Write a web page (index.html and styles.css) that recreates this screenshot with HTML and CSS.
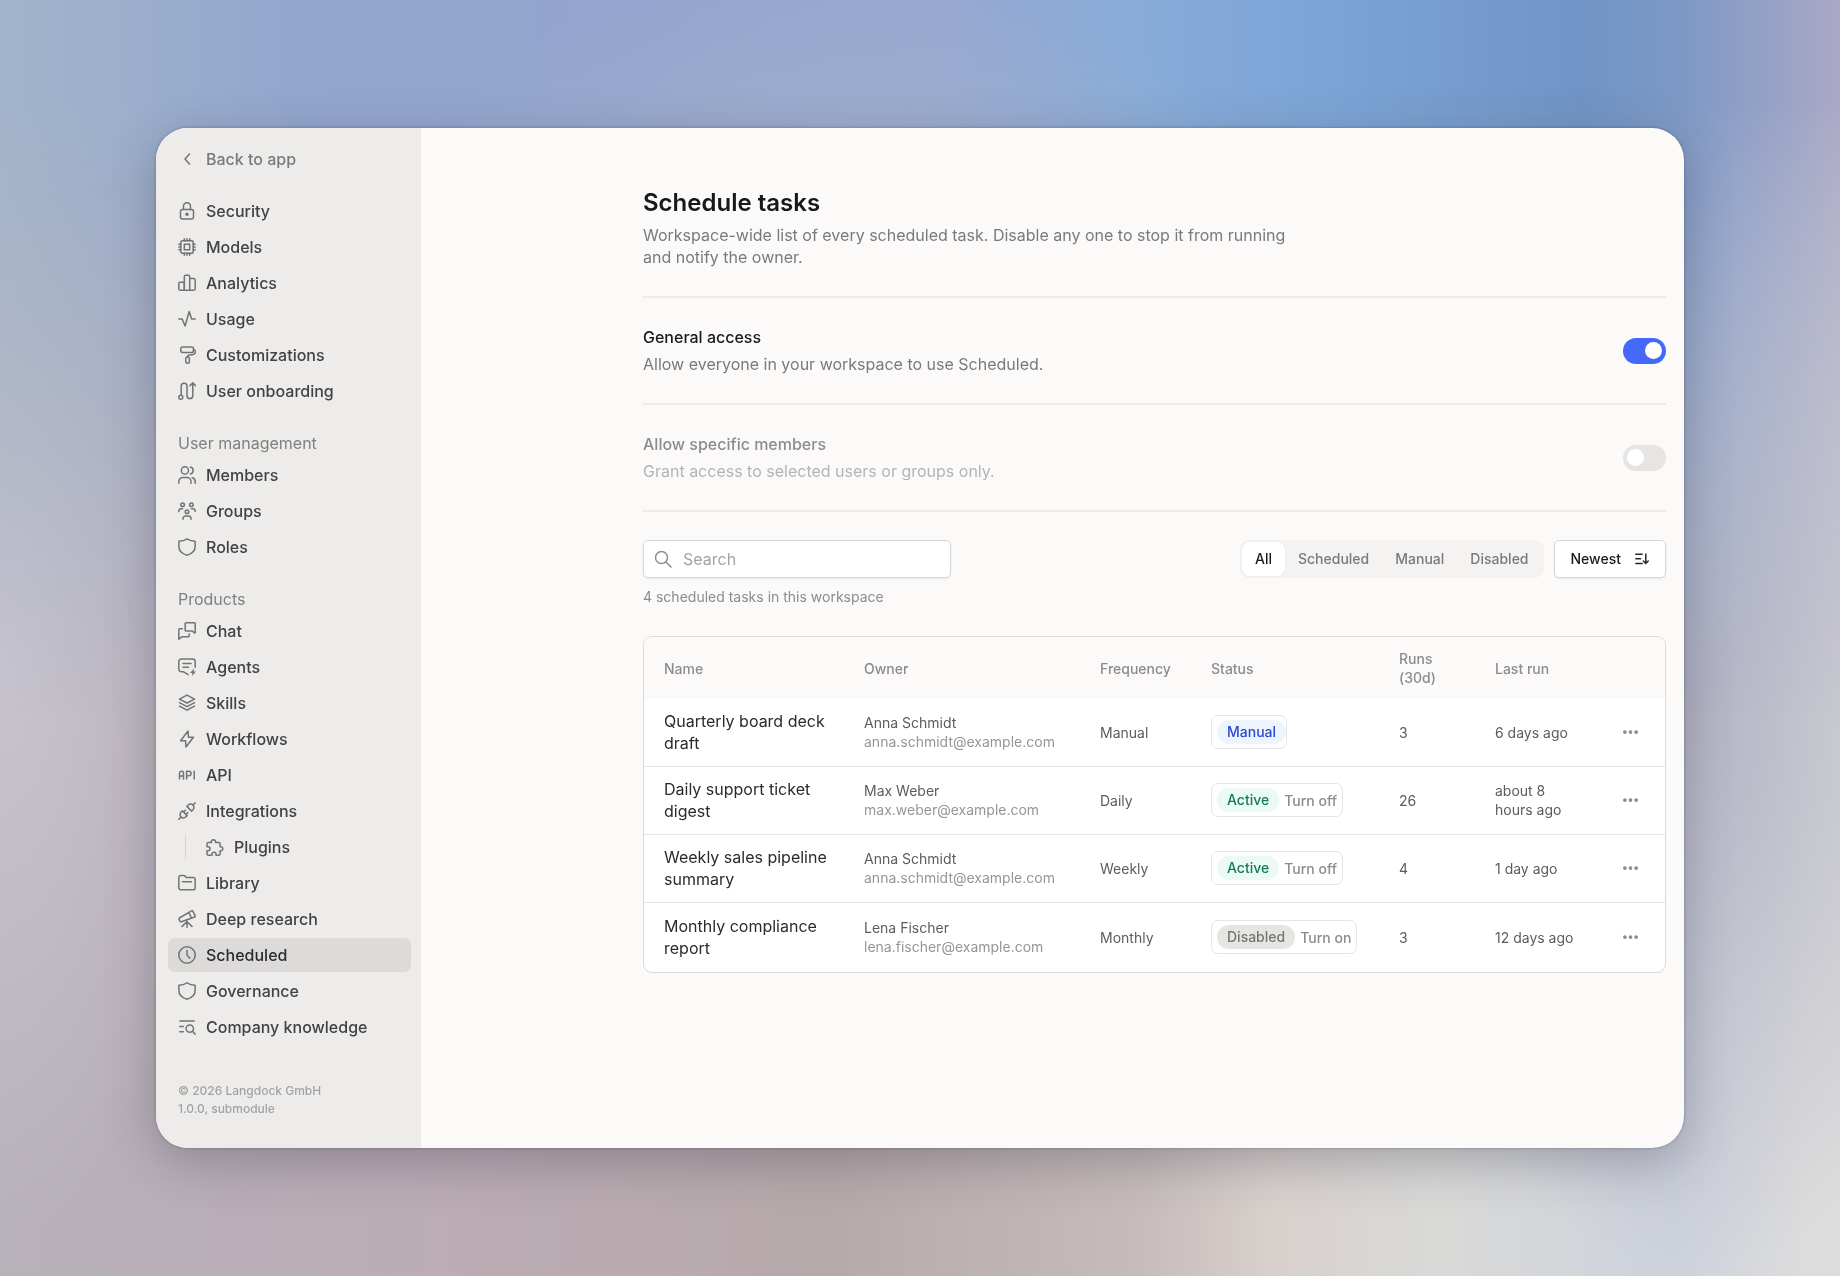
FILE: index.html
```html
<!DOCTYPE html>
<html lang="en">
<head>
  <meta charset="UTF-8" />
  <meta name="viewport" content="width=device-width, initial-scale=1.0"/>
  <title>Schedule tasks</title>
  <link rel="stylesheet" href="styles.css">
</head>
<body>

<div class="window">

  <!-- Sidebar -->
  <aside class="sidebar">
    <nav class="nav">
      <div class="nav-group">
        <a class="nav-item back" href="#"><svg class="icon" viewBox="0 0 18 18"><path d="M11.500 4 7 9l4.500 5"/></svg>Back to app</a>
      </div>

      <div class="nav-group">
        <a class="nav-item" href="#"><svg class="icon" viewBox="0 0 18 18"><path d="M5.500 7.500V4.300a3.500 3.500 0 0 1 7 0v3.200"/><rect x="2.500" y="7.500" width="13" height="9.500" rx="2"/><circle class="fill" cx="9" cy="12.200" r="1.700"/></svg>Security</a>
        <a class="nav-item" href="#"><svg class="icon" viewBox="0 0 18 18"><rect x="2.800" y="2.800" width="12.400" height="12.400" rx="1.500"/><rect x="6.300" y="6.300" width="5.400" height="5.400"/><path d="M6.300 2.800V.8M11.700 2.800V.8M9 2.800V.8M6.300 17.200v-2M9 17.200v-2M11.700 17.200v-2M2.800 6.300h-2M2.800 9h-2M2.800 11.700h-2M17.200 6.300h-2M17.200 9h-2M17.200 11.700h-2"/></svg>Models</a>
        <a class="nav-item" href="#"><svg class="icon" viewBox="0 0 18 18"><path d="M6.300 8.200H2.200a1.400 1.400 0 0 0-1.400 1.400v5.200a1.400 1.400 0 0 0 1.400 1.400h4.100zM11.700 4.600h4.100A1.400 1.400 0 0 1 17.200 6v8.800a1.400 1.400 0 0 1-1.400 1.400h-4.100"/><path d="M6.300 16.200h5.400V2.600a1.400 1.400 0 0 0-1.400-1.400H7.700a1.400 1.400 0 0 0-1.400 1.400z"/></svg>Analytics</a>
        <a class="nav-item" href="#"><svg class="icon" viewBox="0 0 18 18"><path d="M.8 9h3.400l2.900 7 4.100-14.500L13.600 9h3.600"/></svg>Usage</a>
        <a class="nav-item" href="#"><svg class="icon" viewBox="0 0 18 18"><rect x="2.800" y="1" width="12.700" height="5.400" rx="1.800"/><path d="M15.500 3.600c1.600.3 2.300 1.700 1.700 3.200-.7 1.700-2.600 2.200-5 2.200-1.700 0-2.700.5-2.700 2"/><rect x="7.800" y="11" width="3.600" height="6.200" rx="1.500"/></svg>Customizations</a>
        <a class="nav-item" href="#"><svg class="icon" viewBox="0 0 18 18"><circle cx="2.800" cy="15.200" r="2"/><path d="M3.200 13.200V4.100a2.900 2.900 0 0 1 5.800 0v9.600a2.900 2.900 0 0 0 5.800 0V1.200M12 3.600l2.800-2.800 2.800 2.800"/></svg>User onboarding</a>
      </div>

      <div class="nav-group">
        <div class="nav-label">User management</div>
        <a class="nav-item" href="#"><svg class="icon" viewBox="0 0 18 18"><circle cx="6.900" cy="4.400" r="3.600"/><path d="M.8 17.200v-1.700a4 4 0 0 1 4-4H9a4 4 0 0 1 4 4v1.700M12.400.9a3.600 3.600 0 0 1 0 7M14.200 11.700a4 4 0 0 1 3 3.800v1.700"/></svg>Members</a>
        <a class="nav-item" href="#"><svg class="icon" viewBox="0 0 18 18"><circle cx="4.600" cy="2.700" r="1.800"/><circle cx="13.400" cy="2.700" r="1.800"/><circle cx="9" cy="9.700" r="1.800"/><path d="M.8 9.400V9a2.300 2.300 0 0 1 2.300-2.300h1.500M17.200 9.400V9a2.300 2.300 0 0 0-2.300-2.300h-1.500M5 17.200v-.6a2.600 2.600 0 0 1 2.600-2.600h2.800a2.600 2.600 0 0 1 2.600 2.600v.6"/></svg>Groups</a>
        <a class="nav-item" href="#"><svg class="icon" viewBox="0 0 18 18"><path d="M9 .9c2.400 1.600 4.900 2.300 8.100 2.300v5.300c0 4.400-3.600 7.500-8.100 8.700C4.500 16 .9 12.900.9 8.500V3.200C4.100 3.200 6.600 2.500 9 .9z"/></svg>Roles</a>
      </div>

      <div class="nav-group">
        <div class="nav-label">Products</div>
        <a class="nav-item" href="#"><svg class="icon" viewBox="0 0 18 18"><path d="M7.200 1.600a.8.800 0 0 1 .8-.8h8.400a.8.800 0 0 1 .8.800v9.500l-3-2H8a.8.800 0 0 1-.8-.8zM4.400 6.800H1.600a.8.800 0 0 0-.8.800v9.600l3-2.400h6.600a.8.800 0 0 0 .8-.8v-1.900"/></svg>Chat</a>
        <a class="nav-item" href="#"><svg class="icon" viewBox="0 0 18 18"><path d="M17.200 9.200V3.600A2.600 2.600 0 0 0 14.600 1H3.400A2.600 2.600 0 0 0 .8 3.600v7.600a2.600 2.600 0 0 0 2.600 2.600h2.100l4.700 2.900M5 5.600h8M5 9.200h5.500"/><path class="fill" d="m16 10.600-4 4.500h2.400l-.6 3.100 4.200-4.600h-2.500z"/></svg>Agents</a>
        <a class="nav-item" href="#"><svg class="icon" viewBox="0 0 18 18"><path d="m9 1.200 7.600 3.900L9 9 1.400 5.100zM1.400 8.700 9 12.600l7.600-3.900M1.400 12.200 9 16.200l7.600-4"/></svg>Skills</a>
        <a class="nav-item" href="#"><svg class="icon" viewBox="0 0 18 18"><path d="M10 1 2.600 10.800h5L8 17l7.400-9.800h-5z"/></svg>Workflows</a>
        <a class="nav-item" href="#"><svg class="icon" viewBox="0 0 18 18"><path d="M1.500 13V7.200a2 2 0 0 1 2-2h0a2 2 0 0 1 2 2V13M1.500 10h4M8.600 13V5.200h2.200a2.200 2.200 0 0 1 0 4.600H8.600M16.200 5.200V13"/></svg>API</a>
        <a class="nav-item" href="#"><svg class="icon" viewBox="0 0 18 18"><path d="m.8 17.200 2.300-2.300M17.200.8l-2.300 2.300M4.400 8.900l4.700 4.700-1.400 1.400a3.200 3.200 0 0 1-4.600-.1A3.200 3.200 0 0 1 3 10.300zM13.600 9.100 8.900 4.400 10.300 3a3.200 3.200 0 0 1 4.600.1 3.200 3.200 0 0 1 .1 4.600zM5.600 10l1.800-1.800M8 12.400l1.800-1.800"/></svg>Integrations</a>
        <div class="nav-sub">
          <a class="nav-item" href="#"><svg class="icon" viewBox="0 0 18 18"><path d="M2.300 4.400h3.200a2.100 2.100 0 1 1 4 0h3.300a1.300 1.300 0 0 1 1.300 1.300v3.100a2.100 2.100 0 1 1 0 4v3.100a1.300 1.300 0 0 1-1.300 1.300H10v-1a2 2 0 0 0-4 0v1H2.300A1.300 1.300 0 0 1 1 15.900v-3.100h1a2 2 0 0 0 0-4H1V5.700a1.300 1.300 0 0 1 1.300-1.300z"/></svg>Plugins</a>
        </div>
        <a class="nav-item" href="#"><svg class="icon" viewBox="0 0 18 18"><path d="M.8 13.800V3.400a2 2 0 0 1 2-2h2.800c.6 0 1.200.3 1.600.8l1 1.300h7a2 2 0 0 1 2 2v8.300a2 2 0 0 1-2 2H2.800a2 2 0 0 1-2-2zM4.500 7.700h9"/></svg>Library</a>
        <a class="nav-item" href="#"><svg class="icon" viewBox="0 0 18 18"><path d="M1.400 8 13.500.9a1 1 0 0 1 1.400.4l2.200 4.300a1 1 0 0 1-.5 1.400L3.500 11.700a1.200 1.200 0 0 1-1.500-.6l-.9-1.700A1.100 1.100 0 0 1 1.400 8zM10.800 2.500l2.700 5.300M9 10v7.200M9 11.800l-5 4.600M9 11.800l5 4.600"/></svg>Deep research</a>
        <a class="nav-item active" href="#"><svg class="icon" viewBox="0 0 18 18"><circle cx="9" cy="9" r="8.200"/><path d="M9 4.400V9l2.800 3.200"/></svg>Scheduled</a>
        <a class="nav-item" href="#"><svg class="icon" viewBox="0 0 18 18"><path d="M9 .9c2.400 1.600 4.900 2.300 8.100 2.300v5.300c0 4.400-3.600 7.500-8.100 8.700C4.500 16 .9 12.900.9 8.500V3.200C4.100 3.200 6.600 2.500 9 .9z"/></svg>Governance</a>
        <a class="nav-item" href="#"><svg class="icon" viewBox="0 0 18 18"><path d="M1.800 3h14.400M1.800 8.400h3.600M1.800 13.800h3.600"/><circle cx="11.800" cy="10.600" r="3.700"/><path d="m14.500 13.300 2.700 2.900"/></svg>Company knowledge</a>
      </div>
    </nav>

    <footer class="sidebar-footer">
      © 2026 Langdock GmbH<br>
      1.0.0, submodule
    </footer>
  </aside>

  <!-- Main -->
  <main class="main">
    <header class="page-header">
      <h1>Schedule tasks</h1>
      <p>Workspace-wide list of every scheduled task. Disable any one to stop it from running and notify the owner.</p>
    </header>

    <section class="setting">
      <div>
        <label class="setting-title" for="general-access">General access</label>
        <p>Allow everyone in your workspace to use Scheduled.</p>
      </div>
      <input class="switch" type="checkbox" role="switch" id="general-access" checked>
    </section>

    <section class="setting is-disabled">
      <div>
        <label class="setting-title" for="specific-members">Allow specific members</label>
        <p>Grant access to selected users or groups only.</p>
      </div>
      <input class="switch" type="checkbox" role="switch" id="specific-members" disabled>
    </section>

    <div class="toolbar">
      <label class="search">
        <svg class="icon" viewBox="0 0 18 18"><circle cx="7.500" cy="7.500" r="6"/><path d="m12 12 5 5"/></svg>
        <input type="search" placeholder="Search" aria-label="Search">
      </label>
      <div class="tools">
        <div class="tabs">
          <button class="tab selected" type="button">All</button>
          <button class="tab" type="button">Scheduled</button>
          <button class="tab" type="button">Manual</button>
          <button class="tab" type="button">Disabled</button>
        </div>
        <button class="sort" type="button">Newest
          <svg class="icon small" viewBox="0 0 14 14"><path d="M.8 2.200h6.400M.8 6.800h4.800M.8 11.400h6.400M10.800 2v9.400M8.400 9l2.400 2.600L13.200 9"/></svg>
        </button>
      </div>
    </div>
    <p class="count">4 scheduled tasks in this workspace</p>

    <div class="table-wrap">
      <table>
        <colgroup>
          <col class="col-name"><col class="col-owner"><col class="col-frequency"><col class="col-status"><col class="col-runs"><col class="col-last"><col class="col-menu">
        </colgroup>
        <thead>
          <tr>
            <th>Name</th>
            <th>Owner</th>
            <th>Frequency</th>
            <th>Status</th>
            <th>Runs (30d)</th>
            <th>Last run</th>
            <th></th>
          </tr>
        </thead>
        <tbody>
          <tr>
            <td class="name">Quarterly board deck draft</td>
            <td>Anna Schmidt<div class="email">anna.schmidt@example.com</div></td>
            <td>Manual</td>
            <td><div class="status"><span class="pill blue">Manual</span></div></td>
            <td>3</td>
            <td>6 days ago</td>
            <td><button class="more" type="button" aria-label="More actions"><svg viewBox="0 0 16 4"><circle cx="2" cy="2" r="2"/><circle cx="8" cy="2" r="2"/><circle cx="14" cy="2" r="2"/></svg></button></td>
          </tr>
          <tr>
            <td class="name">Daily support ticket digest</td>
            <td>Max Weber<div class="email">max.weber@example.com</div></td>
            <td>Daily</td>
            <td><div class="status"><span class="pill green">Active</span><button class="turn" type="button">Turn off</button></div></td>
            <td>26</td>
            <td>about 8 hours ago</td>
            <td><button class="more" type="button" aria-label="More actions"><svg viewBox="0 0 16 4"><circle cx="2" cy="2" r="2"/><circle cx="8" cy="2" r="2"/><circle cx="14" cy="2" r="2"/></svg></button></td>
          </tr>
          <tr>
            <td class="name">Weekly sales pipeline summary</td>
            <td>Anna Schmidt<div class="email">anna.schmidt@example.com</div></td>
            <td>Weekly</td>
            <td><div class="status"><span class="pill green">Active</span><button class="turn" type="button">Turn off</button></div></td>
            <td>4</td>
            <td>1 day ago</td>
            <td><button class="more" type="button" aria-label="More actions"><svg viewBox="0 0 16 4"><circle cx="2" cy="2" r="2"/><circle cx="8" cy="2" r="2"/><circle cx="14" cy="2" r="2"/></svg></button></td>
          </tr>
          <tr>
            <td class="name">Monthly compliance report</td>
            <td>Lena Fischer<div class="email">lena.fischer@example.com</div></td>
            <td>Monthly</td>
            <td><div class="status"><span class="pill gray">Disabled</span><button class="turn" type="button">Turn on</button></div></td>
            <td>3</td>
            <td>12 days ago</td>
            <td><button class="more" type="button" aria-label="More actions"><svg viewBox="0 0 16 4"><circle cx="2" cy="2" r="2"/><circle cx="8" cy="2" r="2"/><circle cx="14" cy="2" r="2"/></svg></button></td>
          </tr>
        </tbody>
      </table>
    </div>
  </main>

</div>

</body>
</html>
```
FILE: styles.css
```css
* {
  box-sizing: border-box;
}

body {
  margin: 0;
  min-height: 100vh;
  padding: 128px 156px;
  display: flex;
  font-family: Inter, sans-serif;
  font-size: 16px;
  line-height: 22px;
  color: #1a1a1e;
  background:
    radial-gradient(ellipse 12% 45% at 0% 52%, #c8c4ce 0%, rgba(200, 196, 206, 0) 100%),
    radial-gradient(ellipse 16% 45% at 92% 55%, #b4b4c4 0%, rgba(180, 180, 196, 0) 100%),
    linear-gradient(to right, #b7b1ba 0%, #bbacb5 24%, #b6a9aa 45%, #c6bcbb 62%, #d8d0cd 69%, #d9d9d7 78%, #cdd2dc 91%, #dcdcdc 98%);
}

/* Blue sky that fades out towards the middle of the page */
body::before {
  content: "";
  position: fixed;
  inset: 0;
  z-index: -1;
  background:
    radial-gradient(ellipse 22% 16% at 45% 14%, rgba(160, 178, 203, 0.8) 0%, rgba(160, 178, 203, 0) 100%),
    linear-gradient(to right, #a2b4ca 0%, #92a7cd 16%, #93a4ce 34%, #98a7d0 50%, #88abd9 62%, #7ba5d6 72%, #7094c5 86%, #8099c5 92%, #aaa9c5 100%);
  mask-image: linear-gradient(#000 8%, transparent 56%);
}

h1,
p {
  margin: 0;
}

button,
input {
  font: inherit;
  color: inherit;
}

.window {
  flex: 1;
  display: flex;
  border-radius: 32px;
  overflow: hidden;
  background: #fbfaf9;
  box-shadow: 0 0 3px rgba(30, 30, 60, 0.35), 0 14px 50px rgba(40, 40, 60, 0.3);
}

/* Icons */
.icon {
  width: 18px;
  height: 18px;
  flex: none;
  fill: none;
  stroke: #737373;
  stroke-width: 1.5;
  stroke-linecap: round;
  stroke-linejoin: round;
}

.icon .fill {
  fill: #737373;
  stroke: none;
}

.icon.small {
  width: 14px;
  height: 14px;
  stroke: #2b2b2e;
}

/* Sidebar */
.sidebar {
  width: 265px;
  flex: none;
  display: flex;
  flex-direction: column;
  justify-content: space-between;
  padding: 14px 10px 30px 12px;
  background: #edecea;
}

.nav {
  display: flex;
  flex-direction: column;
  gap: 18px;
}

.nav-group {
  display: flex;
  flex-direction: column;
  gap: 2px;
}

.nav-item {
  display: flex;
  align-items: center;
  gap: 10px;
  height: 34px;
  padding: 0 10px;
  border-radius: 7px;
  color: #424244;
  font-weight: 500;
  text-decoration: none;
}

.nav-item.back {
  color: #7a7a7a;
}

.nav-item.active {
  background: #dcdbda;
  color: #2b2b2e;
}

.nav-label {
  padding: 6px 10px 2px;
  color: #808080;
}

.nav-sub {
  display: flex;
  align-items: center;
  gap: 10px;
  margin-left: 17px;
}

.nav-sub::before {
  content: "";
  width: 1px;
  height: 24px;
  background: #d3d2d0;
}

.sidebar-footer {
  padding: 0 10px;
  font-size: 12px;
  line-height: 18px;
  font-weight: 500;
  color: #a3a3a3;
}

/* Main */
.main {
  flex: 1;
  min-width: 0;
  padding: 59px 18px 58px 222px;
}

.page-header {
  padding-bottom: 28px;
  border-bottom: 2px solid #ecebea;
}

.page-header h1 {
  margin-bottom: 5px;
  font-size: 24px;
  line-height: 32px;
  font-weight: 600;
  color: #18181b;
}

.page-header p {
  max-width: 644px;
  color: #7a7a7c;
}

.setting {
  display: flex;
  align-items: center;
  justify-content: space-between;
  padding: 28px 0;
  border-bottom: 2px solid #ecebea;
}

.setting-title {
  display: block;
  margin-bottom: 5px;
  font-weight: 500;
}

.setting p {
  color: #7a7a7c;
}

.setting.is-disabled .setting-title {
  color: #8c8c8e;
}

.setting.is-disabled p {
  color: #b4b4b5;
}

.switch {
  appearance: none;
  display: flex;
  align-items: center;
  width: 43px;
  height: 26px;
  margin: 0;
  padding: 0 4px;
  border-radius: 13px;
  background: #e6e5e4;
}

.switch::before {
  content: "";
  width: 17px;
  height: 17px;
  border-radius: 50%;
  background: #fff;
}

.switch:checked {
  justify-content: flex-end;
  background: #4469fa;
}

/* Toolbar */
.toolbar {
  display: flex;
  justify-content: space-between;
  margin-top: 28px;
}

.search {
  display: flex;
  align-items: center;
  gap: 11px;
  width: 308px;
  height: 38px;
  padding: 0 10px;
  border: 1px solid #d9d8d7;
  border-radius: 5px;
  background: #fff;
  box-shadow: 0 1px 2px rgba(0, 0, 0, 0.08);
}

.search .icon {
  stroke: #8c8c8c;
}

.search input {
  flex: 1;
  min-width: 0;
  padding: 0;
  border: 0;
  outline: 0;
  background: none;
}

.search input::placeholder {
  color: #a3a3a3;
}

.tools {
  display: flex;
  gap: 10px;
}

.tabs {
  display: flex;
  padding: 2px;
  border-radius: 9px;
  background: #f4f3f2;
}

.tab {
  padding: 0 13px;
  border: 0;
  border-radius: 8px;
  background: none;
  font-size: 14px;
  font-weight: 500;
  color: #7a7a7c;
}

.tab.selected {
  background: #fff;
  color: #1a1a1e;
  box-shadow: 0 0 2px rgba(0, 0, 0, 0.08);
}

.sort {
  display: flex;
  align-items: center;
  gap: 14px;
  height: 38px;
  padding: 0 16px;
  border: 1px solid #d9d8d7;
  border-radius: 5px;
  background: #fff;
  box-shadow: 0 1px 2px rgba(0, 0, 0, 0.08);
  font-size: 14px;
  font-weight: 500;
}

.count {
  margin: 9px 0 29px;
  font-size: 14px;
  line-height: 20px;
  color: #8c8c8e;
}

/* Table */
.table-wrap {
  overflow: hidden;
  border: 1px solid #dbdad9;
  border-radius: 9px;
  background: #fff;
}

table {
  width: 100%;
  table-layout: fixed;
  border-collapse: separate;
  border-spacing: 0;
  font-size: 14px;
  line-height: 19px;
  color: #5c5c5f;
}

.col-name { width: 200px; }
.col-owner { width: 236px; }
.col-frequency { width: 111px; }
.col-status { width: 188px; }
.col-runs { width: 96px; }
.col-menu { width: 62px; }

th {
  padding: 12px 20px;
  background: #fbfaf9;
  font-weight: 500;
  text-align: left;
  color: #8c8c8e;
}

td {
  padding: 11px 20px 12px;
  border-bottom: 1px solid #e6e5e4;
}

tbody tr:last-child td {
  padding: 12px 20px 13px;
  border-bottom: 0;
}

tbody .name {
  padding-right: 8px;
  font-size: 16px;
  line-height: 22px;
  color: #2b2b2e;
}

.email {
  color: #969698;
}

.status {
  display: inline-flex;
  align-items: center;
  height: 34px;
  padding-left: 5px;
  border: 1px solid #e6e5e4;
  border-radius: 7px;
  vertical-align: middle;
}

.pill {
  padding: 0 10px;
  border-radius: 12px;
  line-height: 24px;
  font-weight: 500;
}

.pill.blue {
  background: #eef4fe;
  color: #2a48cf;
}

.pill.green {
  background: #ebfbf4;
  color: #15795a;
}

.pill.gray {
  background: #e6e5e1;
  color: #757575;
}

.turn {
  padding: 0 5px;
  border: 0;
  background: none;
  font-weight: 500;
  color: #8c8c8e;
}

.more {
  display: flex;
  padding: 0;
  border: 0;
  background: none;
}

.more svg {
  width: 15px;
  height: 4px;
  fill: #8c8c8e;
}
```
